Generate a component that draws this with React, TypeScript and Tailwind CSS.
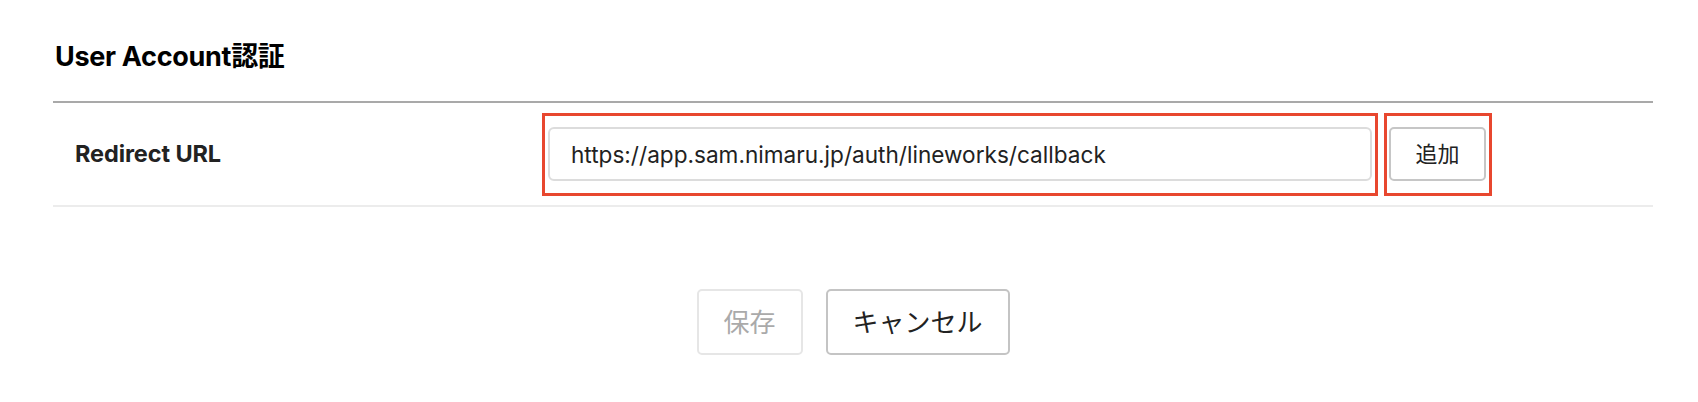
const font = { fontFamily: '"Inter", "Noto Sans CJK JP", sans-serif' };

export default function App() {
  return (
    <div className="min-h-screen bg-white text-[#222]" style={font}>
      <div className="pl-[53px] pt-[41px] w-[1653px]">
        <h2 className="pl-[2px] text-[27px] leading-[32px] font-bold text-black tracking-[-0.3px]">
          User Account認証
        </h2>

        <div className="mt-[28px] border-t-[2px] border-[#a9a9a9]">
          {/* Redirect URL row */}
          <div className="flex items-center h-[104px] border-b-[2px] border-[#ececec]">
            <div className="w-[495px] pl-[22px] text-[23.5px] font-bold tracking-[-0.1px] text-[#222]">
              Redirect URL
            </div>
            <div className="relative w-[824px]">
              <input
                readOnly
                value="https://app.sam.nimaru.jp/auth/lineworks/callback"
                className="w-full h-[54px] rounded-[6px] border-[2px] border-[#dcdcdc] px-[21px] text-[22.6px] text-[#222] outline-none"
                style={font}
              />
              <div className="absolute left-[-6px] right-[-6px] top-[-14px] bottom-[-15px] border-[3px] border-[#e8472f] pointer-events-none" />
            </div>
            <div className="relative ml-[17px]">
              <button className="w-[97px] h-[54px] rounded-[5px] border-[2px] border-[#c6c6c6] bg-white text-[22px] text-[#222]">
                追加
              </button>
              <div className="absolute left-[-5px] right-[-6px] top-[-14px] bottom-[-15px] border-[3px] border-[#e8472f] pointer-events-none" />
            </div>
          </div>

          {/* footer actions */}
          <div className="flex justify-center gap-[23px] pt-[82px]">
            <button
              disabled
              className="w-[106px] h-[66px] rounded-[5px] border-[2px] border-[#e6e6e6] bg-white text-[26px] text-[#aaaaaa]"
            >
              保存
            </button>
            <button className="w-[184px] h-[66px] rounded-[5px] border-[2px] border-[#c4c4c4] bg-white text-[26px] text-[#222]">
              キャンセル
            </button>
          </div>
        </div>
      </div>
    </div>
  );
}
